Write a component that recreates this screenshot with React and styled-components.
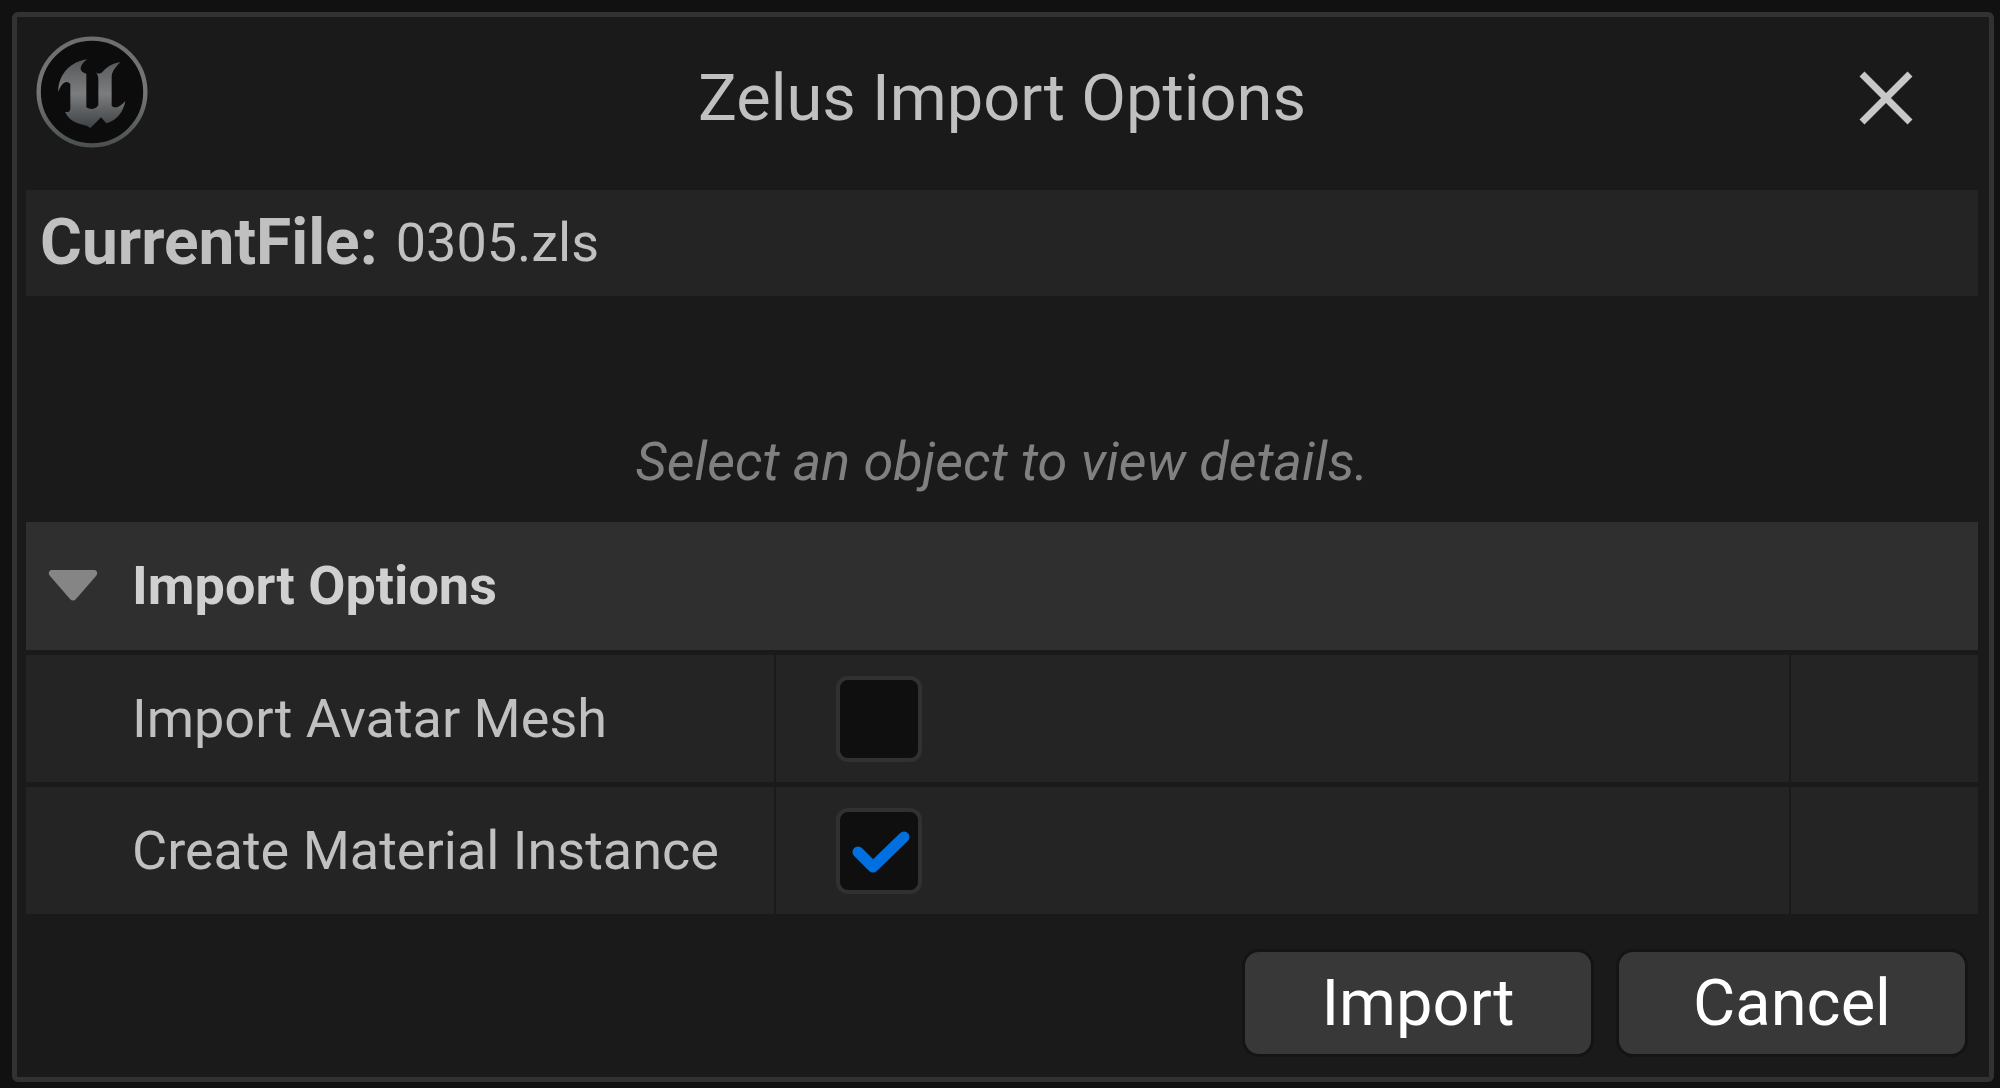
import { useState } from 'react';
import styled, { createGlobalStyle } from 'styled-components';

const GlobalStyle = createGlobalStyle`
  *, *::before, *::after {
    box-sizing: border-box;
  }
  body {
    margin: 0;
    background: #111111;
    color: #c0c0c0;
    font-family: Roboto, "Liberation Sans", sans-serif;
    font-size: 54px;
    line-height: 60px;
  }
  button {
    border: 0;
    padding: 0;
    background: none;
    color: inherit;
    font: inherit;
    cursor: pointer;
  }
`;

const Page = styled.div`
  display: flex;
  min-height: 100vh;
  padding: 12px 6px 6px 12px;
`;

const Dialog = styled.form`
  display: flex;
  flex-direction: column;
  flex: 1;
  min-width: 0;
  padding: 0 11px 0 9px;
  border: 5px solid #323232;
  border-radius: 6px;
  background: #1a1a1a;
`;

const TitleBar = styled.header`
  display: grid;
  grid-template-columns: 134px 1fr 134px;
  align-items: start;
  height: 173px;
  padding-top: 19px;
`;

const Logo = styled.svg`
  width: 112px;
  height: 112px;
  margin-left: 10px;
`;

const Title = styled.h1`
  margin: 0;
  padding-top: 22px;
  font-size: 65px;
  font-weight: 400;
  line-height: 80px;
  text-align: center;
`;

const CloseButton = styled.button`
  display: flex;
  justify-self: start;
  margin-top: 33px;
  padding-left: 13px;
`;

const FileBar = styled.div`
  display: flex;
  align-items: center;
  gap: 18px;
  height: 106px;
  padding: 0 14px;
  background: #242424;

  & > strong {
    font-size: 64px;
    line-height: 80px;
  }
`;

const EmptyDetails = styled.p`
  margin: 0;
  padding: 136px 0 30px;
  color: #808080;
  font-style: italic;
  text-align: center;
`;

const Category = styled.section`
  display: flex;
  flex-direction: column;
  gap: 5px;
`;

const CategoryHeader = styled.button`
  display: flex;
  align-items: center;
  gap: 34px;
  height: 128px;
  padding: 0 22px;
  background: #2f2f2f;
  color: #d0d0d0;
  font-weight: 700;
  text-align: left;
`;

const Arrow = styled.svg`
  width: 50px;
  height: 32px;
  fill: #858585;
  transform: ${({ $open }) => ($open ? 'none' : 'rotate(-90deg)')};
`;

const Row = styled.div`
  display: grid;
  grid-template-columns: 748fr 1014fr 187px;
  gap: 2px;
  height: 127px;
`;

const Cell = styled.div`
  display: flex;
  align-items: center;
  padding-left: ${({ $indent }) => $indent || 0}px;
  background: #242424;
`;

const CheckWrap = styled.span`
  position: relative;
  display: flex;

  & > svg {
    position: absolute;
    inset: 0;
    pointer-events: none;
  }
`;

const CheckInput = styled.input`
  appearance: none;
  width: 86px;
  height: 86px;
  margin: 0;
  border: 4px solid #313131;
  border-radius: 12px;
  background: #0f0f0f;
`;

const Footer = styled.footer`
  display: flex;
  justify-content: flex-end;
  gap: 28px;
  margin-top: auto;
  padding: 38px 13px 23px;
`;

const ActionButton = styled.button`
  width: 346px;
  height: 102px;
  border-radius: 14px;
  background: #383838;
  box-shadow: 0 0 0 3px #141414;
  color: #ffffff;
  font-size: 65px;
  line-height: 80px;
`;

const UnrealLogo = () => (
  <Logo viewBox="0 0 336 336" aria-hidden="true">
    <defs>
      <linearGradient id="letterFill" x1="0" y1="0" x2="0" y2="1">
        <stop offset="0" stopColor="#55585a" />
        <stop offset="0.5" stopColor="#7c7d7e" />
        <stop offset="1" stopColor="#3c4144" />
      </linearGradient>
      <linearGradient id="ringFill" x1="0" y1="0" x2="0" y2="1">
        <stop offset="0" stopColor="#6c6e6f" />
        <stop offset="0.5" stopColor="#747677" />
        <stop offset="1" stopColor="#4c5051" />
      </linearGradient>
    </defs>
    <circle
      cx="168"
      cy="168"
      r="160"
      fill="#0c0c0c"
      stroke="url(#ringFill)"
      strokeWidth="13"
    />
    <path
      fill="url(#letterFill)"
      d="M153 70 C108 76 66 112 67 168 C76 140 92 130 103 144 V216 C103 228 96 229 87 228 C103 262 137 265 152 269 L163 276 C176 264 186 254 195 244 L211 262 C242 254 262 228 268 195 C252 213 238 219 227 210 V120 C229 104 240 93 253 78 C229 82 210 95 199 108 C190 116 182 113 175 105 C184 112 187 120 187 130 V208 C180 219 164 223 151 214 V113 C128 108 128 90 153 70 Z"
    />
  </Logo>
);

const OptionRow = ({ id, label, checked, onChange }) => (
  <Row>
    <Cell $indent={106}>
      <label htmlFor={id}>{label}</label>
    </Cell>
    <Cell $indent={60}>
      <CheckWrap>
        <CheckInput
          type="checkbox"
          id={id}
          checked={checked}
          onChange={onChange}
        />
        {checked && (
          <svg viewBox="0 0 86 86" width="86" height="86">
            <path
              d="M22 44 L37 59 L68 29"
              fill="none"
              stroke="#0070e0"
              strokeWidth="11"
              strokeLinecap="round"
              strokeLinejoin="round"
            />
          </svg>
        )}
      </CheckWrap>
    </Cell>
    <Cell />
  </Row>
);

const App = () => {
  const [open, setOpen] = useState(true);
  const [options, setOptions] = useState([
    { id: 'importAvatarMesh', label: 'Import Avatar Mesh', checked: false },
    {
      id: 'createMaterialInstance',
      label: 'Create Material Instance',
      checked: true,
    },
  ]);

  const handleToggle = (id) => {
    setOptions(
      options.map((option) =>
        option.id === id ? { ...option, checked: !option.checked } : option
      )
    );
  };
  const handleSubmit = (event) => {
    event.preventDefault();
  };

  return (
    <>
      <GlobalStyle />
      <Page>
        <Dialog onSubmit={handleSubmit}>
          <TitleBar>
            <UnrealLogo />
            <Title>Zelus Import Options</Title>
            <CloseButton type="button" aria-label="Close">
              <svg width="58" height="58" viewBox="0 0 58 58">
                <path
                  d="M5 5 L53 53 M53 5 L5 53"
                  stroke="#c8c8c8"
                  strokeWidth="7"
                />
              </svg>
            </CloseButton>
          </TitleBar>
          <FileBar>
            <strong>CurrentFile:</strong>
            <span>0305.zls</span>
          </FileBar>
          <EmptyDetails>Select an object to view details.</EmptyDetails>
          <Category>
            <CategoryHeader
              type="button"
              aria-expanded={open}
              onClick={() => setOpen(!open)}
            >
              <Arrow viewBox="0 0 50 32" $open={open}>
                <path d="M3 0 H47 Q51 2 48 6 L28 29 Q25 32 22 29 L2 6 Q-1 2 3 0 Z" />
              </Arrow>
              Import Options
            </CategoryHeader>
            {open &&
              options.map((option) => (
                <OptionRow
                  key={option.id}
                  {...option}
                  onChange={() => handleToggle(option.id)}
                />
              ))}
          </Category>
          <Footer>
            <ActionButton type="submit">Import</ActionButton>
            <ActionButton type="button">Cancel</ActionButton>
          </Footer>
        </Dialog>
      </Page>
    </>
  );
};
export default App;
